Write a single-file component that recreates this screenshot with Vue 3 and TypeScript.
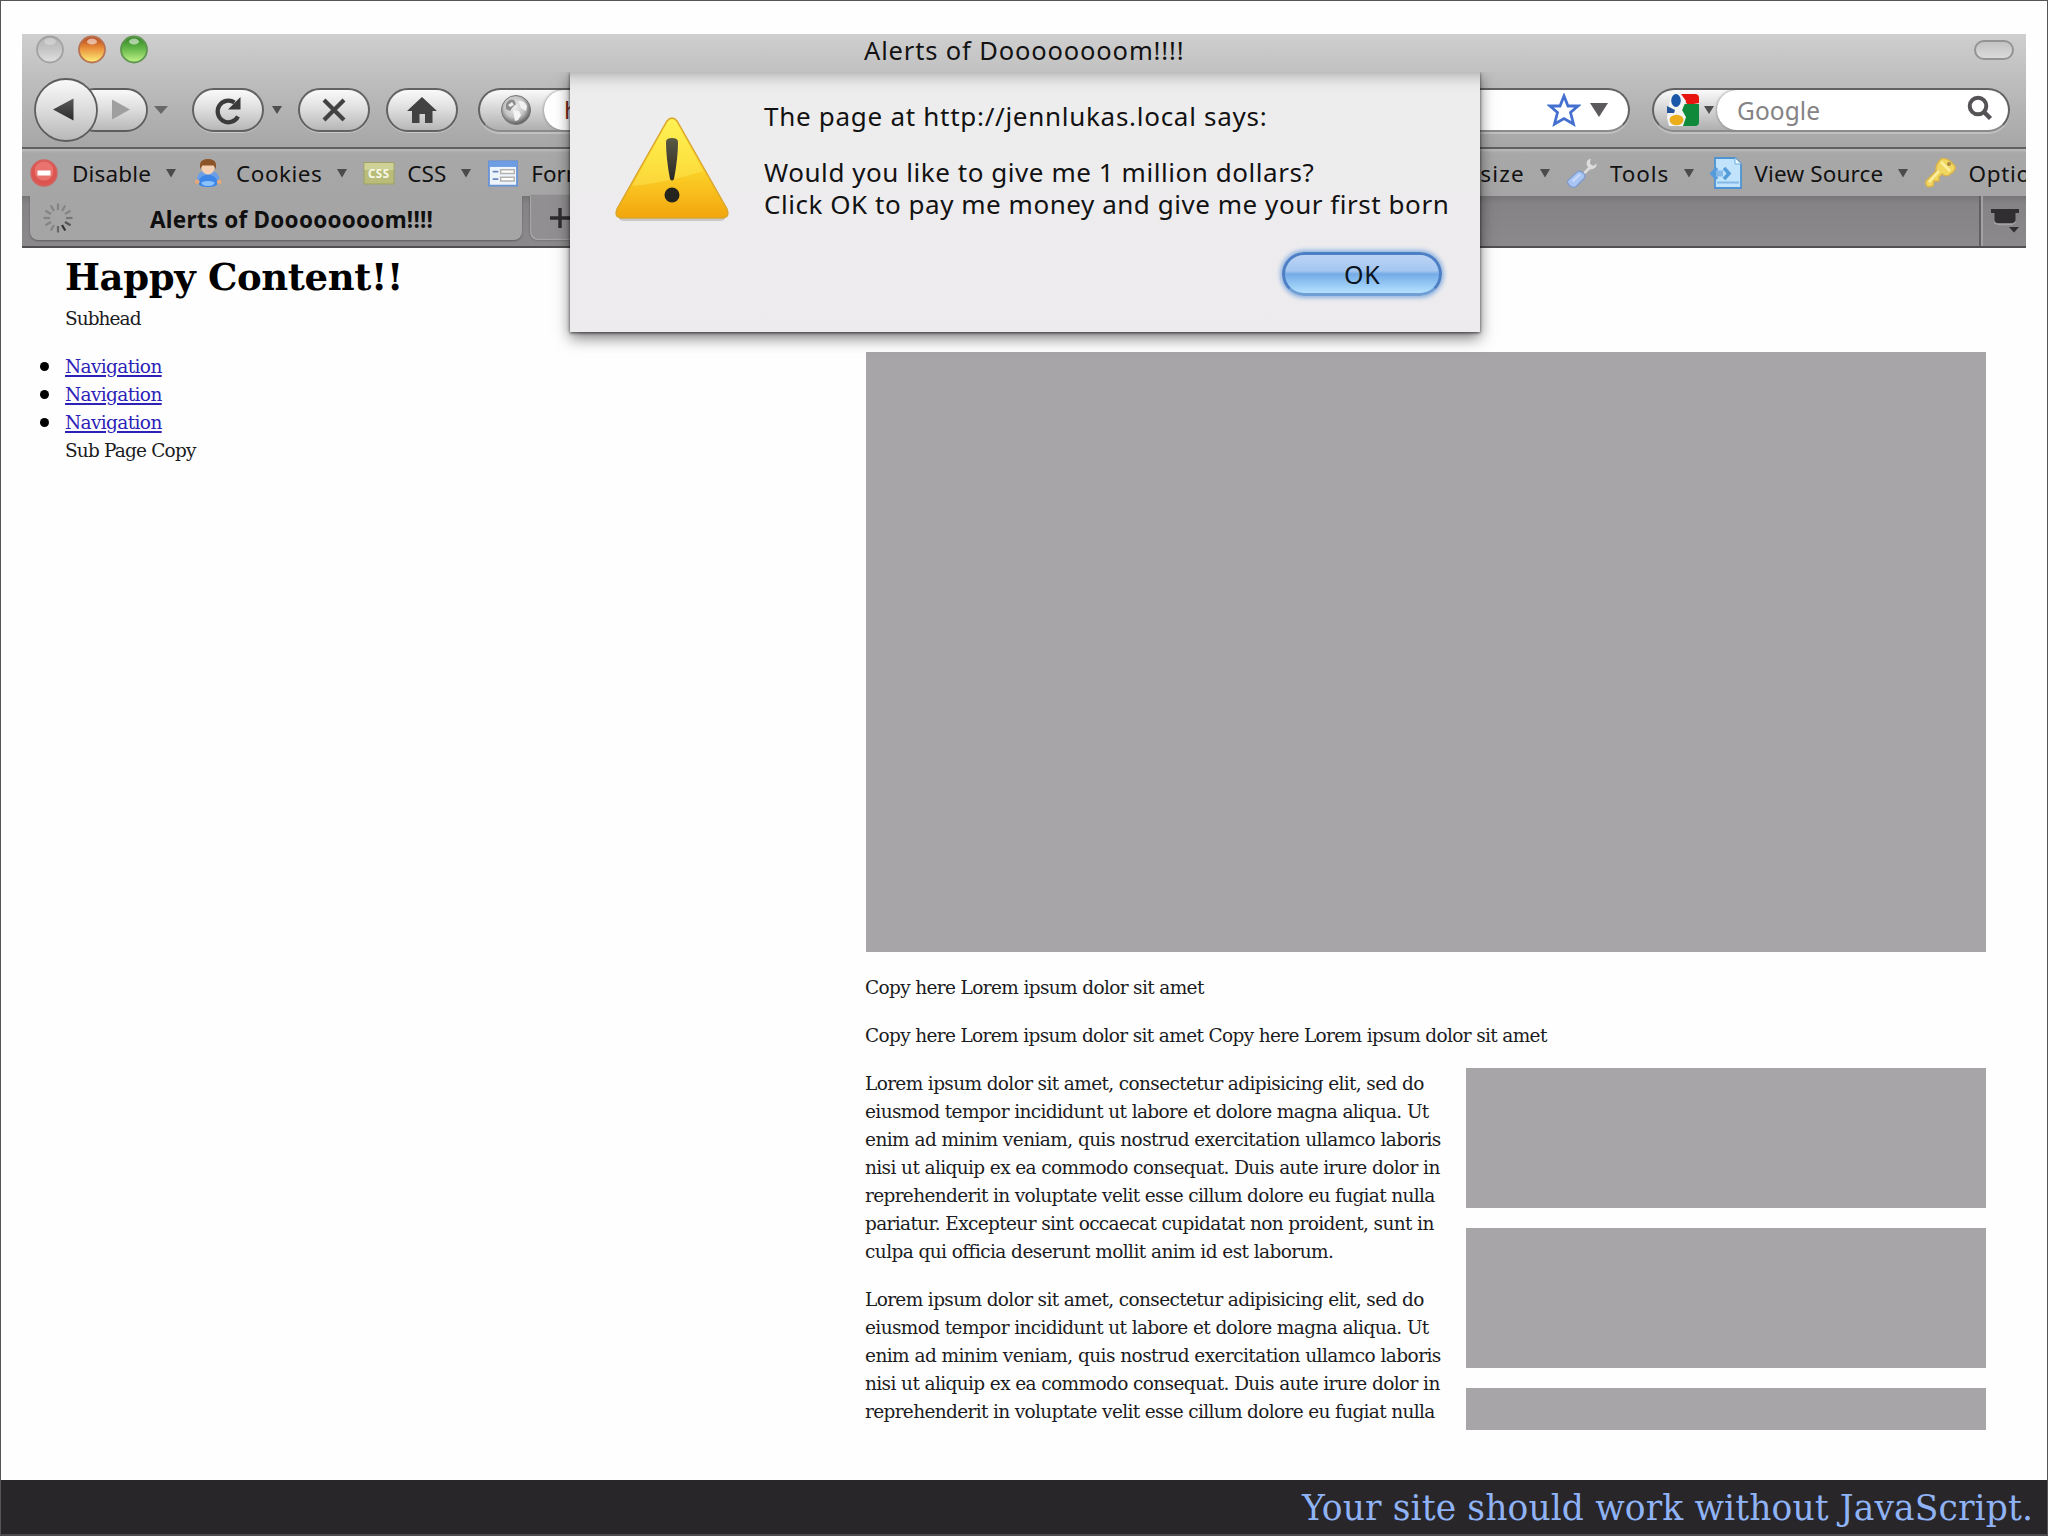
<script setup lang="ts">
import type { Directive } from 'vue'

// Tracks a line of text so that it spans the given width in pixels.
const vFit: Directive<HTMLElement, number> = {
  mounted(el, { value }) {
    const count = (el.textContent ?? '').trim().length
    const natural = el.getBoundingClientRect().width
    if (count > 1) el.style.letterSpacing = `${(value - natural) / (count - 0.5)}px`
  },
}

interface Line { text: string; width: number }

const lorem: Line[] = [
  { text: 'Lorem ipsum dolor sit amet, consectetur adipisicing elit, sed do', width: 559 },
  { text: 'eiusmod tempor incididunt ut labore et dolore magna aliqua. Ut', width: 564 },
  { text: 'enim ad minim veniam, quis nostrud exercitation ullamco laboris', width: 576 },
  { text: 'nisi ut aliquip ex ea commodo consequat. Duis aute irure dolor in', width: 575 },
  { text: 'reprehenderit in voluptate velit esse cillum dolore eu fugiat nulla', width: 570 },
  { text: 'pariatur. Excepteur sint occaecat cupidatat non proident, sunt in', width: 569 },
  { text: 'culpa qui officia deserunt mollit anim id est laborum.', width: 468 },
]

const paragraphs: Line[][] = [lorem, lorem.slice(0, 5)]

const tools = [
  { id: 'disable', label: 'Disable', width: 79 },
  { id: 'cookies', label: 'Cookies', width: 86 },
  { id: 'css', label: 'CSS', width: 39 },
  { id: 'forms', label: 'Forms', width: 66 },
  { id: 'resize', label: 'Resize', width: 73 },
  { id: 'tools', label: 'Tools', width: 59 },
  { id: 'source', label: 'View Source', width: 129 },
  { id: 'options', label: 'Options', width: 88 },
]

const spokes = Array.from({ length: 12 }, (_, i) => ({
  angle: i * 30,
  shade: i >= 3 && i <= 6 ? ['#777', '#555', '#333', '#666'][i - 3] : '#858485',
}))

const title = 'Alerts of Doooooooom!!!!'
</script>

<template>
  <div class="slide">
    <div class="window">
      <header class="titlebar">
        <svg class="lights" width="122" height="32" viewBox="0 0 122 32">
          <defs>
            <linearGradient id="lg0" x1="0" y1="0" x2="0" y2="1"><stop offset="0" stop-color="#b3b2b3" /><stop offset=".5" stop-color="#c6c5c6" /><stop offset="1" stop-color="#e2e1e2" /></linearGradient>
            <linearGradient id="lg1" x1="0" y1="0" x2="0" y2="1"><stop offset="0" stop-color="#b5431c" /><stop offset=".45" stop-color="#e98f3a" /><stop offset="1" stop-color="#fff27a" /></linearGradient>
            <linearGradient id="lg2" x1="0" y1="0" x2="0" y2="1"><stop offset="0" stop-color="#2f8423" /><stop offset=".45" stop-color="#62b547" /><stop offset="1" stop-color="#c4f58a" /></linearGradient>
          </defs>
          <circle cx="18" cy="15.500" r="13" fill="url(#lg0)" stroke="#a3a2a3" stroke-width="1.800" />
          <circle cx="60" cy="15.500" r="13" fill="url(#lg1)" stroke="#b87350" stroke-width="1.800" />
          <circle cx="102" cy="15.500" r="13" fill="url(#lg2)" stroke="#5f9650" stroke-width="1.800" />
          <ellipse cx="18" cy="7.500" rx="6" ry="3.500" fill="#fff" opacity=".3" />
          <ellipse cx="60" cy="7.500" rx="5" ry="3" fill="#fff" opacity=".55" />
          <ellipse cx="102" cy="7.500" rx="5" ry="3" fill="#fff" opacity=".55" />
        </svg>
        <span v-fit="320" class="caption">{{ title }}</span>
        <span class="lozenge"></span>
      </header>

      <div class="navbar">
        <svg class="backfwd" width="116" height="66" viewBox="0 0 116 66">
          <defs>
            <linearGradient id="btn" x1="0" y1="0" x2="0" y2="1"><stop offset="0" stop-color="#fbfafb" /><stop offset=".5" stop-color="#dddcdd" /><stop offset="1" stop-color="#b8b7b8" /></linearGradient>
            <linearGradient id="ink" x1="0" y1="0" x2="0" y2="1"><stop offset="0" stop-color="#5a595a" /><stop offset="1" stop-color="#2c2b2c" /></linearGradient>
          </defs>
          <rect x="40" y="12" width="73" height="42" rx="21" fill="url(#btn)" stroke="#5e5c5e" stroke-width="1.800" />
          <circle cx="32" cy="33" r="31" fill="url(#btn)" stroke="#5e5c5e" stroke-width="1.800" />
          <path d="M19 32.500 39.500 21.500V43.500Z" fill="url(#ink)" />
          <path d="M78 22.500 96 32.500 78 42.500Z" fill="#a09fa0" />
        </svg>
        <svg class="drop d1" width="14" height="8" viewBox="0 0 14 8"><path d="M0 0H14L7 8Z" fill="#696869" /></svg>
        <span class="pill reload">
          <svg width="30" height="32" viewBox="0 0 30 32">
            <path d="M25 22.500A10.800 10.800 0 1 1 21.500 8.500" fill="none" stroke="#3c3b3c" stroke-width="4.200" />
            <path d="M27.500 3V15.500H15Z" fill="#3c3b3c" />
          </svg>
        </span>
        <svg class="drop d2" width="10" height="8" viewBox="0 0 10 8"><path d="M0 0H10L5 8Z" fill="#4f4e4f" /></svg>
        <span class="pill stop">
          <svg width="26" height="24" viewBox="0 0 26 24"><path d="M3 2 23 22M23 2 3 22" stroke="#434243" stroke-width="4.200" /></svg>
        </span>
        <span class="pill home">
          <svg width="32" height="28" viewBox="0 0 32 28"><path d="M16 1 31 15H26.500V27H19V18H13.500V27H6V15H1Z" fill="#434243" /></svg>
        </span>
        <div class="field url">
          <svg class="globe" width="32" height="34" viewBox="0 0 32 34">
            <defs><radialGradient id="gl" cx=".45" cy=".4" r=".6"><stop offset="0" stop-color="#eee" /><stop offset=".6" stop-color="#c4c3c4" /><stop offset="1" stop-color="#5c5b5c" /></radialGradient></defs>
            <circle cx="16" cy="17" r="14.500" fill="url(#gl)" stroke="#777" />
            <path d="M6 11Q9 5 14 7L16 11 12 15 10 18 6 16Z" fill="#8c8b8c" /><path d="M8 12 12 9 14 12 10 14Z" fill="#eee" />
            <path d="M13 17 19 18 21 22 18 27 15 28Z" fill="#f5f5f5" /><path d="M18 8Q24 7 27 13L26 18 21 15Z" fill="#f1f1f1" />
          </svg>
          <div class="well">
            <span class="address">http://jennlukas.local</span>
            <svg class="star" width="34" height="34" viewBox="0 0 34 34"><path d="M17 3 21 13H31L23.500 19.500 26.500 31 17 25.500 7.500 31 10.500 19.500 3 13H13Z" fill="#fdfeff" stroke="#4470cf" stroke-width="2.800" /></svg>
            <svg width="18" height="14" viewBox="0 0 18 14"><path d="M0 0H18L9 14Z" fill="#5c5a5c" /></svg>
          </div>
        </div>
        <div class="field search">
          <svg class="google" width="34" height="34" viewBox="0 0 34 34">
            <path d="M13 1H29Q33 1 33 5V10L22 12Z" fill="#e8150f" /><path d="M17 11H33V29Q33 33 29 33H14Z" fill="#10893a" />
            <path d="M5 1H15L20 8 16 17 20 24 17 33H3L1 25 3 11Z" fill="#f4f4f2" />
            <ellipse cx="10" cy="7.500" rx="4.800" ry="6.500" fill="#1b57a8" /><path d="M1 13 9 17 8 20H1Z" fill="#24539c" />
            <ellipse cx="10.500" cy="27" rx="7" ry="5.200" fill="#edae1c" />
          </svg>
          <svg class="gdrop" width="10" height="8" viewBox="0 0 10 8"><path d="M0 0H10L5 8Z" fill="#4f4e4f" /></svg>
          <div class="well">
            <span v-fit="83" class="placeholder">Google</span>
            <svg class="lens" width="26" height="26" viewBox="0 0 26 26"><circle cx="11" cy="11" r="8.300" fill="none" stroke="#555355" stroke-width="4" /><path d="M16.500 16.500 23.500 23.500" stroke="#555355" stroke-width="4.500" /></svg>
          </div>
        </div>
      </div>

      <div class="devbar">
        <div v-for="t in tools" :key="t.id" class="tool" :class="t.id">
          <span class="glyph">
            <svg v-if="t.id === 'disable'" width="28" height="28" viewBox="0 0 28 28"><circle cx="14" cy="14" r="13" fill="#dd5550" stroke="#cf6560" stroke-width="1.500" /><circle cx="14" cy="12" r="9.500" fill="#ee827c" opacity=".7" /><rect x="7.500" y="11.500" width="13" height="5" fill="#fff" /></svg>
            <svg v-else-if="t.id === 'cookies'" width="28" height="30" viewBox="0 0 30 32"><path d="M3 25Q3 15 10 14H20Q27 15 28 25L24 27 6 27Z" fill="#6a9fe6" /><path d="M4 25Q8 18 15 18T26 25Q26 31 15 31T4 25Z" fill="#3c86e8" /><path d="M8 26Q15 23 22 26Q22 30 15 30T8 26Z" fill="#8ac3fa" /><circle cx="3.500" cy="25.500" r="2.500" fill="#e8a779" /><circle cx="27" cy="25.500" r="2.500" fill="#e8a779" /><ellipse cx="15" cy="10.500" rx="7" ry="7" fill="#f4cfb2" /><path d="M6.500 12V6Q8 1 15 1T23.500 6V12L21 8H9Z" fill="#8a5426" /></svg>
            <svg v-else-if="t.id === 'css'" width="32" height="24" viewBox="0 0 32 24"><rect x="1" y="1.500" width="30" height="21.500" fill="#b9bd79" stroke="#9da164" /><rect x="1.500" y="2" width="29" height="7" fill="#cfd297" /><text x="5" y="16.800" font-family="Noto Sans" font-size="11.500" font-weight="700" fill="#f8f9e8" textLength="21">CSS</text></svg>
            <svg v-else-if="t.id === 'forms'" width="30" height="27" viewBox="0 0 32 28"><rect x="1" y="1" width="30" height="26" fill="#eef4fc" stroke="#6a93d3" stroke-width="2" /><rect x="1" y="1" width="30" height="6" fill="#6d9de2" /><path d="M5 12H11M5 20H11" stroke="#6b86bd" stroke-width="2" /><path d="M13.500 10H28V14H13.500ZM13.500 18H28V22H13.500Z" fill="#fff" stroke="#b3b2ae" stroke-width="1.500" /></svg>
            <svg v-else-if="t.id === 'tools'" width="32" height="32" viewBox="0 0 32 34"><path d="M15 18 22 11Q18 6 23 2L26 1 25 7 28 9 32 6Q33 13 24 14L18 20Z" fill="#dcdcdd" stroke="#a5a4a6" /><path d="M12 15Q20 16 19 22L10 31Q6 34 2.500 30T2 24Z" fill="#a9c5f3" stroke="#7d9ace" stroke-width="1.300" /><path d="M6 26 14 18.500" stroke="#c5d9fa" stroke-width="2.500" /></svg>
            <svg v-else-if="t.id === 'source'" width="34" height="34" viewBox="0 0 34 34"><path d="M6 2H26L32 8V32H6Z" fill="#c1e3fb" stroke="#4f94d0" stroke-width="1.800" /><path d="M26 2V8H32" fill="#f4fbff" stroke="#6faede" /><path d="M8 26.500H30" stroke="#82b9e7" stroke-width="2" /><path d="M8 12 3 17.500 8 23M15 12 20 17.500 15 23" fill="none" stroke="#559cdc" stroke-width="3.500" /><path d="M7 17.500H14" stroke="#84b9e7" stroke-width="6" /></svg>
            <svg v-else-if="t.id === 'options'" width="34" height="34" viewBox="0 0 34 34"><path d="M18 3Q22 1 27 5L32 10Q33 13 30 16L26 19Q23 21 19 18L16 21 16 25 11 25 10 30 5 31Q2 29 3 25L13 15Q12 9 18 3Z" fill="#f1d660" stroke="#d9b44a" stroke-width="1.400" /><path d="M6 26 16 15M18 6 27 15" stroke="#fbf0a1" stroke-width="2.500" /><circle cx="26" cy="8" r="2" fill="#a8874a" /></svg>
          </span>
          <span v-fit="t.width" class="label">{{ t.label }}</span>
          <svg class="arrow" width="12" height="9" viewBox="0 0 12 9"><path d="M1 0H11L6 8.500Z" fill="#4c4b4c" /></svg>
        </div>
      </div>

      <div class="tabs">
        <div class="tab active">
          <svg width="32" height="32" viewBox="-16 -16 32 32">
            <line v-for="s in spokes" :key="s.angle" x1="0" y1="-8" x2="0" y2="-14.500" :stroke="s.shade" stroke-width="2.200" :transform="`rotate(${s.angle})`" />
          </svg>
          <span v-fit="283" class="name">{{ title }}</span>
        </div>
        <div class="tab new">
          <svg width="20" height="20" viewBox="0 0 20 20"><path d="M10 0V20M0 10H20" stroke="#2e2d2e" stroke-width="3.400" /></svg>
        </div>
        <div class="alltabs">
          <svg width="30" height="26" viewBox="0 0 30 26"><path d="M1 1H29V5H25.500V12Q25 15 22 15H8Q5 15 4.500 12V5H1Z" fill="#302e30" /><path d="M4 15Q8 17.500 22 16.500L26 14" fill="none" stroke="#aaa" /><path d="M19 19H29L24 24.500Z" fill="#302e30" /></svg>
        </div>
      </div>

      <main class="page">
        <section class="side">
          <h1><span v-fit="338">Happy Content!!</span></h1>
          <p><span v-fit="76">Subhead</span></p>
          <ul>
            <li v-for="n in 3" :key="n"><a v-fit="97">Navigation</a></li>
          </ul>
          <p><span v-fit="131">Sub Page Copy</span></p>
        </section>
        <section class="body">
          <div class="hero"></div>
          <p class="copy"><span v-fit="339">Copy here Lorem ipsum dolor sit amet</span></p>
          <p class="copy"><span v-fit="682">Copy here Lorem ipsum dolor sit amet Copy here Lorem ipsum dolor sit amet</span></p>
          <div class="columns">
            <div class="text">
              <p v-for="(lines, i) in paragraphs" :key="i">
                <span v-for="l in lines" :key="l.text" class="line"><span v-fit="l.width">{{ l.text }}</span></span>
              </p>
            </div>
            <div class="boxes">
              <div class="box"></div>
              <div class="box"></div>
              <div class="box last"></div>
            </div>
          </div>
        </section>
      </main>
    </div>

    <footer><span v-fit="731">Your site should work without JavaScript.</span></footer>

    <div class="dialog">
      <svg class="warning" width="122" height="112" viewBox="0 0 122 112">
        <defs>
          <linearGradient id="warn" x1="0" y1="0" x2="0" y2="1"><stop offset="0" stop-color="#fff24a" /><stop offset=".45" stop-color="#fcd92b" /><stop offset=".75" stop-color="#f8bd1c" /><stop offset="1" stop-color="#f2a50c" /></linearGradient>
          <linearGradient id="bang" x1="0" y1="0" x2="0" y2="1"><stop offset="0" stop-color="#5b5a45" /><stop offset="1" stop-color="#2a2824" /></linearGradient>
        </defs>
        <path d="M61 8 9 98Q6 104 12 105H110Q116 104 113 98Z" fill="#8a8780" opacity=".35" transform="translate(0 2)" />
        <path d="M56 7Q61 1 66 7L116 95Q119 103 112 104H10Q3 103 6 95Z" fill="url(#warn)" stroke="#dba62c" stroke-width="1.500" />
        <path d="M57 8Q61 3 65 8L92 57Q60 68 21 72Z" fill="#fff36b" opacity=".35" />
        <path d="M55 28Q55 24 61 24T67 28Q67 44 63 65Q61 68 59 65Q55 44 55 28Z" fill="url(#bang)" />
        <circle cx="61" cy="81" r="7.500" fill="#25241f" />
      </svg>
      <div class="message">
        <p><span v-fit="503">The page at http://jennlukas.local says:</span></p>
        <p class="ask"><span v-fit="550">Would you like to give me 1 million dollars?</span></p>
        <p><span v-fit="685">Click OK to pay me money and give me your first born</span></p>
        <button type="button"><span v-fit="36">OK</span></button>
      </div>
    </div>
  </div>
</template>

<style>
body { margin: 0; }
</style>

<style scoped>
* { box-sizing: border-box; }
p, h1, ul { margin: 0; padding: 0; font-weight: inherit; }
svg { display: block; flex: none; }
span, a { white-space: nowrap; }
.slide {
  position: relative;
  width: 2048px;
  height: 1536px;
  padding: 33px 21px 0;
  border: 1px solid #565456;
  border-bottom: 2px solid #4b494b;
  background: #fefefe;
  overflow: hidden;
  font-family: "Noto Sans", sans-serif;
  color: #121212;
}
.window {
  width: 2004px;
  height: 1396px;
  overflow: hidden;
  background: linear-gradient(#d0cfd0, #bfbebf 45px, #a7a6a7 114px) no-repeat 0 0 / 100% 114px;
}
.titlebar { display: flex; align-items: flex-start; height: 33px; }
.lights { margin-left: 10px; }
.caption { display: block; margin-left: 710px; font-size: 25.5px; line-height: 33px; }
.lozenge {
  width: 40px;
  height: 20px;
  margin: 6px 12px 0 auto;
  border: 2px solid #959395;
  border-radius: 10px;
  background: linear-gradient(#c4c3c4, #dcdbdc);
}
.navbar { display: flex; align-items: center; height: 80px; padding: 5px 16px 0 12px; }
.d1 { margin-left: 4px; }
.pill {
  display: flex;
  align-items: center;
  justify-content: center;
  flex: none;
  width: 72px;
  height: 44px;
  border: 2px solid #636163;
  border-radius: 22px;
  background: linear-gradient(#fbfafb, #dddcdd 50%, #b8b7b8);
  box-shadow: 0 1px 0 #c9c8c9;
}
.reload { margin-left: 24px; }
.d2 { margin-left: 8px; }
.stop { margin-left: 16px; }
.home { margin-left: 16px; }
.field {
  display: flex;
  align-items: center;
  flex: none;
  height: 44px;
  border: 2px solid #636163;
  border-bottom-color: #8c8a8c;
  border-radius: 22px;
  background: linear-gradient(#fbfafb, #d5d4d5 50%, #b0afb0);
  box-shadow: 0 2px 0 #c2c1c2;
  overflow: hidden;
}
.url { width: 1152px; margin-left: 20px; }
.globe { margin: 0 12px 0 20px; }
.well {
  display: flex;
  align-items: center;
  flex: 1;
  height: 100%;
  border-radius: 20px;
  background: #fff;
  box-shadow: 0 0 3px #777;
}
.address { margin-left: 20px; font-size: 24px; color: #7a2c20; }
.star { margin: 0 9px 0 auto; }
.url .well svg:last-child { margin-right: 20px; }
.search { width: 358px; margin-left: 22px; }
.google { margin-left: 12px; }
.gdrop { margin: 0 3px 0 4px; }
.placeholder { margin: 1px 0 0 20px; font-size: 24.5px; color: #858385; }
.lens { margin: 0 15px 3px auto; }
.devbar {
  display: flex;
  align-items: center;
  height: 49px;
  padding: 1px 0 0 4px;
  border-top: 2px solid #616061;
  background: linear-gradient(#bdbcbd, #a9a8a9 4px, #a6a5a6);
  font-size: 22.5px;
}
.tool { display: flex; align-items: center; flex: none; margin-right: 13px; }
.glyph { display: flex; justify-content: center; width: 36px; margin-right: 10px; }
.label { display: block; }
.arrow { margin-left: 14px; }
.resize { margin-left: 769px; }
.tabs {
  display: flex;
  height: 52px;
  padding-left: 8px;
  background: linear-gradient(#777577, #858385 8px, #8b898b);
  border-bottom: 2px solid #515051;
}
.tab {
  display: flex;
  align-items: center;
  height: 44px;
  border-radius: 0 0 8px 8px;
  box-shadow: 0 1px 2px #5d5b5d;
}
.active { width: 492px; padding-left: 12px; background: #a6a5a6; clip-path: inset(0 -4px -4px -4px); }
.name { display: block; margin: 2px 0 0 76px; font-size: 22.5px; font-weight: 700; color: #101010; }
.new { width: 60px; margin-left: 8px; padding-left: 20px; background: #918f91; box-shadow: inset 1px -1px 1px #aaa8aa, 0 0 2px #555; }
.alltabs { display: flex; align-items: center; width: 47px; margin-left: auto; padding-left: 9px; border-left: 2px solid #626062; box-shadow: inset 2px 0 0 #a3a1a3; }
.page {
  display: flex;
  height: 1182px;
  padding-top: 1px;
  font-family: "DejaVu Serif", serif;
  font-size: 18.5px;
  line-height: 28px;
  background: #fefefe;
  color: #1b1b22;
}
.side { width: 844px; padding: 2px 0 0 43px; }
h1 { margin-bottom: 2px; font-size: 37px; line-height: 52px; font-weight: 700; color: #000; }
ul { margin-top: 20px; list-style: none; }
li { display: flex; align-items: center; margin-left: -25px; }
li::before { content: ""; width: 9px; height: 9px; margin: 0 16px 2px 0; border-radius: 50%; background: #000; }
li a { color: #2c22b8; text-decoration: underline; text-decoration-thickness: 2px; text-underline-offset: 2px; }
.body { width: 1120px; padding-top: 103px; }
.hero { height: 600px; margin-bottom: 22px; background: #a7a5a7; }
.copy { margin: 0 0 20px -1px; }
.columns { display: flex; justify-content: space-between; }
.text { margin-left: -1px; }
.text p { margin-bottom: 20px; }
.line { display: block; }
.boxes { width: 520px; margin-top: -2px; }
.box { height: 140px; margin-bottom: 20px; background: #a7a5a7; }
.last { height: 42px; margin: 0; }
footer {
  display: flex;
  justify-content: flex-end;
  margin: 50px -21px 0;
  height: 56px;
  padding-right: 14px;
  background: #282629;
  color: #8fb3f5;
  font-family: "DejaVu Serif", serif;
  font-size: 34.5px;
  line-height: 57px;
}
.dialog {
  position: absolute;
  left: 569px;
  top: 71px;
  display: flex;
  width: 910px;
  height: 260px;
  background: linear-gradient(#bdbcbd, #d6d5d6 6px, #e9e8e9 14px, #eeedee 24px, #edebed);
  box-shadow: 0 6px 14px rgba(0, 0, 0, .5), 0 1px 3px rgba(0, 0, 0, .65);
  clip-path: inset(0 -30px -30px -30px);
}
.warning { margin: 42px 0 0 41px; }
.message { display: flex; flex-direction: column; flex: 1; padding: 28px 38px 0 31px; font-size: 26px; line-height: 32px; }
.ask { margin-top: 24px; }
button {
  align-self: flex-end;
  width: 160px;
  height: 44px;
  margin: 32px 0 0;
  padding: 0;
  border: 3px solid #4c7fc4;
  border-bottom-color: #6f9fd3;
  border-radius: 22px;
  background: linear-gradient(#bcd4f5, #a4c6f0 42%, #74abe6 50%, #9accf6 80%, #b4e0fd);
  box-shadow: 0 0 4px 2px #8fb4e2;
  font: 25px/38px "Noto Sans", sans-serif;
  color: #0c1420;
}
.message > button { margin-right: 1px; }
.message p { margin-right: -6px; }
</style>
